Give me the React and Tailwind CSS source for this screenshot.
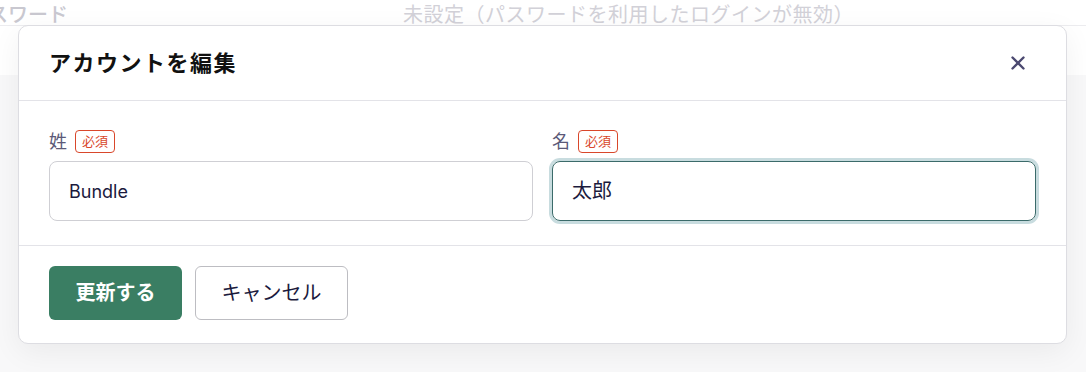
import { X } from 'lucide-react';

const FONT = { fontFamily: 'Inter, "Noto Sans CJK JP", sans-serif' };

function Field({ label, value, focused, jp }) {
  return (
    <div className="flex flex-col">
      <div className="flex items-center gap-[8px] h-[24px]">
        <span className="text-[18px] text-[#5c5a78]">{label}</span>
        <span className="text-[13px] leading-none text-[#d9472b] border border-[#d9472b] rounded-[4px] px-[6px] py-[4px]">
          必須
        </span>
      </div>
      <div
        className={
          focused
            ? 'mt-[8px] h-[60px] rounded-[8px] border border-[#3b6b6a] ring-[3px] ring-[#c8dcdf] flex items-center px-[19px]'
            : 'mt-[8px] h-[60px] rounded-[8px] border border-[#cfcfd4] flex items-center px-[19px]'
        }
      >
        <span className={jp ? 'text-[20px] text-[#1b1a3d]' : 'text-[18px] text-[#1b1a3d]'}>{value}</span>
      </div>
    </div>
  );
}

export default function App() {
  return (
    <div className="relative w-full h-[372px] overflow-hidden bg-white" style={FONT}>
      {/* Page behind the dialog */}
      <div className="h-[26px] border-b border-[#ececef] flex items-end">
        <span className="w-[435px] shrink-0 -ml-[32px] text-[20px] leading-[20px] text-[#c9c8d0] font-medium">パスワード</span>
        <span className="text-[20px] tracking-[0.5px] leading-[20px] text-[#d2d1d8]">未設定（パスワードを利用したログインが無効）</span>
      </div>
      <div className="h-[49px]" />
      <div className="h-[297px] bg-[#f8f8f9]" />

      {/* Dialog */}
      <div className="absolute left-[18px] top-[25px] w-[1049px] rounded-[10px] border border-[#dddde2] bg-white shadow-[0_8px_30px_rgba(0,0,0,0.06)]">
        <div className="h-[75px] flex items-center justify-between pl-[30px] pr-[37px] border-b border-[#e3e3e8]">
          <h2 className="text-[22px] tracking-[1.5px] font-bold text-[#111111]">アカウントを編集</h2>
          <X size={22} strokeWidth={2.6} className="text-[#4b4970]" />
        </div>
        <div className="grid grid-cols-2 gap-x-[19px] pl-[30px] pr-[30px] pt-[28px] pb-[24px] border-b border-[#e3e3e8]">
          <Field label="姓" value="Bundle" />
          <Field label="名" value="太郎" focused jp />
        </div>
        <div className="flex items-center gap-[13px] pl-[30px] pt-[20px] pb-[23px]">
          <button className="h-[54px] w-[133px] rounded-[6px] bg-[#3a7e63] text-white text-[20px] font-bold">
            更新する
          </button>
          <button className="h-[54px] w-[153px] rounded-[6px] border border-[#bdbdc2] bg-white text-[#1b1a3d] text-[20px]">
            キャンセル
          </button>
        </div>
      </div>
    </div>
  );
}
